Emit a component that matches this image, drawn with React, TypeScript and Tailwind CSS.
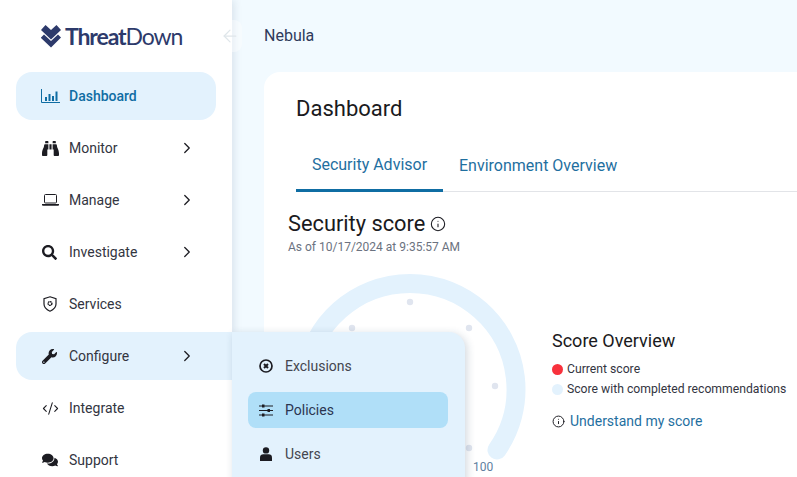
import React from "react";
import { ChevronRight, Info, CodeXml, ArrowLeft } from "lucide-react";
import { FaBinoculars, FaSearch, FaWrench, FaComments } from "react-icons/fa";

const DashIcon = () => (
  <svg width="19" height="14" viewBox="0 0 19 14" fill="none" className="-ml-[1px]">
    <path d="M0.5 0V13.5H19" stroke="#0f6da3" strokeWidth="1" />
    <path d="M4 8h2v4H4zM7.5 5h2v7h-2zM11 7h2v5h-2zM14.5 2.500h2V12h-2z" fill="#0f6da3" />
  </svg>
);
const LaptopIcon = () => (
  <svg width="17" height="12" viewBox="0 0 17 12" fill="none">
    <rect x="2.500" y="0.500" width="12" height="8.500" rx="1" stroke="#1c1c22" />
    <path d="M0 10h17v0.800a1 1 0 0 1-1 1H1a1 1 0 0 1-1-1z" fill="#1c1c22" />
  </svg>
);
const ShieldIcon = () => (
  <svg width="14" height="16" viewBox="0 0 14 16" fill="none">
    <path d="M7 0.800 13 2.800V8c0 3.300-2.700 5.800-6 7.200C3.700 13.800 1 11.300 1 8V2.800z" stroke="#1c1c22" strokeWidth="1.200" />
    <circle cx="7" cy="7.500" r="1.900" stroke="#1c1c22" strokeWidth="1.400" strokeDasharray="1.600 0.400" />
  </svg>
);
const ExcludeIcon = () => (
  <svg width="14" height="14" viewBox="0 0 14 14" fill="none">
    <circle cx="7" cy="7" r="6" stroke="#1c1c22" strokeWidth="1.700" />
    <path d="M5 5l4 4M9 5l-4 4" stroke="#1c1c22" strokeWidth="2" />
  </svg>
);
const SlidersIcon = () => (
  <svg width="14" height="13" viewBox="0 0 14 13" fill="none">
    <path d="M0 2h14M0 6.500h14M0 11h14" stroke="#1c1c22" strokeWidth="1" />
    <rect x="3" y="0.500" width="2.500" height="3" fill="#1c1c22" />
    <rect x="8.500" y="5" width="2.500" height="3" fill="#1c1c22" />
    <rect x="3" y="9.500" width="2.500" height="3" fill="#1c1c22" />
  </svg>
);
const UserIcon = () => (
  <svg width="12" height="14" viewBox="0 0 12 14" fill="#1c1c22" className="ml-[1px]">
    <circle cx="6" cy="3.400" r="3.200" />
    <path d="M0 14V10.500C0 8.500 1.500 7.300 3.200 7.300h5.600C10.500 7.300 12 8.500 12 10.500V14z" />
  </svg>
);

const Logo = () => (
  <div className="flex items-center gap-1">
    <svg width="20" height="23" viewBox="0 0 20 23" fill="#2d3a6b">
      <path d="M0 5 4.500 0 10 5 15.500 0 20 5 10 14.500z" />
      <path d="M0 12.500 3 9.500 10 16 17 9.500 20 12.500 10 22.500 0 13z" />
    </svg>
    <span className="text-[23px] leading-none tracking-[-1.100px] text-[#2d3a6b] font-['Lato',sans-serif]">
      <span className="font-bold">Threat</span>
      <span className="font-normal">Down</span>
    </span>
  </div>
);

const NavItem = ({ icon, label, arrow, active, open }: { icon: React.ReactNode; label: string; arrow?: boolean; active?: boolean; open?: boolean }) => (
  <div className={`flex h-12 shrink-0 items-center pl-[26px] ${open ? "w-[216px] rounded-l-2xl bg-[#e3f2fd] pr-4" : "w-[200px]"} ${active ? "rounded-2xl bg-[#e3f2fd]" : ""}`}>
    <span className="flex w-[27px] items-center">{icon}</span>
    <span className={`flex-1 text-[14px] ${active ? "font-medium text-[#0f6da3]" : "text-[#33353f]"}`}>{label}</span>
    {arrow && <ChevronRight size={18} strokeWidth={1.700} className="mr-[20px] text-[#1c1c22]" />}
  </div>
);

const SubItem = ({ icon, label, active }: { icon: React.ReactNode; label: string; active?: boolean }) => (
  <div className={`flex h-9 items-center rounded-lg pl-[11px] ${active ? "bg-[#b0dff8]" : ""}`}>
    <span className="flex w-[26px] items-center">{icon}</span>
    <span className={`text-[14px] ${active ? "text-[#2b3550]" : "text-[#44464f]"}`}>{label}</span>
  </div>
);

const Gauge = () => {
  const dots = [[410, 304], [469, 330], [495, 388], [469, 450], [352, 330]];
  return (
    <svg width="260" height="204" viewBox="280 273 260 204" className="block">
      <path d="M 323 452 A 106 106 0 1 1 497 452" fill="none" stroke="#e3f2fd" strokeWidth="19" strokeLinecap="round" />
      {dots.map(([x, y]) => (
        <circle key={x * y} cx={x} cy={y} r="3.200" fill="#e0e5ef" />
      ))}
    </svg>
  );
};

export default function App() {
  return (
    <div className="relative flex h-[477px] w-[797px] overflow-hidden bg-[#f2faff] font-['Roboto',sans-serif]">
      <aside className="z-10 flex h-full w-[232px] shrink-0 flex-col bg-white px-4 shadow-[2px_0_8px_rgba(30,60,90,0.12)]">
        <div className="flex h-[72px] shrink-0 items-center pl-[25px]"><Logo /></div>
        <nav className="flex flex-col gap-1">
          <NavItem active icon={<DashIcon />} label="Dashboard" />
          <NavItem arrow icon={<FaBinoculars size={17} color="#1c1c22" />} label="Monitor" />
          <NavItem arrow icon={<LaptopIcon />} label="Manage" />
          <NavItem arrow icon={<FaSearch size={15} color="#1c1c22" />} label="Investigate" />
          <NavItem icon={<span className="pl-[1px]"><ShieldIcon /></span>} label="Services" />
          <NavItem open arrow icon={<FaWrench size={15} color="#1c1c22" />} label="Configure" />
          <NavItem icon={<CodeXml size={17} strokeWidth={1.500} color="#1c1c22" />} label="Integrate" />
          <NavItem icon={<FaComments size={16} color="#1c1c22" />} label="Support" />
        </nav>
      </aside>

      <div className="absolute left-[218px] top-[20px] z-20 flex h-8 w-6 items-center justify-center rounded-lg bg-white/40">
        <ArrowLeft size={20} strokeWidth={1.500} className="text-[#dfe6ea]" />
      </div>

      <main className="flex min-w-0 flex-1 flex-col pl-8">
        <header className="flex h-[72px] shrink-0 items-center text-[16px] text-[#2f3a5c]">Nebula</header>
        <section className="flex-1 rounded-tl-2xl bg-white">
          <div className="pl-8 pt-[22px]">
            <h1 className="text-[22px] leading-[30px] text-[#1a1a20]">Dashboard</h1>
            <div className="mt-[20px] flex border-b border-[#e2e4e8]">
              <div className="-mb-[1px] flex h-[48px] w-[147px] items-center justify-center border-b-[3px] border-[#0f6da3] pb-[3px] text-[16px] text-[#1f6f9f]">Security Advisor</div>
              <div className="flex h-[47px] items-center pb-[3px] pl-4 text-[16px] text-[#1f6f9f]">Environment Overview</div>
            </div>
          </div>
          <div className="flex items-center gap-[5px] pl-6 pt-[19px]">
            <h2 className="text-[21.800px] leading-[26px] text-[#1a1a20]">Security score</h2>
            <Info size={16} strokeWidth={1.600} className="mb-[1px] text-[#1c1c22]" />
          </div>
          <p className="pl-6 pt-[2px] text-[12px] leading-[16px] text-[#6b7280]">As of 10/17/2024 at 9:35:57 AM</p>
          <div className="flex pl-4 pt-[16px]">
            <Gauge />
            <div className="pl-3 pt-[58px]">
              <h3 className="text-[18px] leading-[24px] text-[#1a1a20]">Score Overview</h3>
              <div className="mt-[6px] flex items-center gap-[4px] text-[12.200px] leading-[20px] text-[#33353f]">
                <span className="h-[11px] w-[11px] rounded-full bg-[#f8313c]" />Current score
              </div>
              <div className="flex items-center gap-[4px] text-[12.200px] leading-[20px] text-[#33353f]">
                <span className="h-[11px] w-[11px] rounded-full bg-[#e3f2fd]" />Score with completed recommendations
              </div>
              <div className="mt-[12px] flex items-center gap-[5px] text-[14px] leading-[20px] text-[#1f6f9f]">
                <Info size={13} strokeWidth={1.800} className="text-[#1c1c22]" />Understand my score
              </div>
            </div>
          </div>
        </section>
      </main>

      <div className="absolute left-[232px] top-[332px] z-20 flex h-[160px] w-[233px] flex-col gap-2 rounded-r-2xl bg-[#e3f2fd] pl-4 pr-[17px] pt-4 shadow-[2px_2px_8px_rgba(30,60,90,0.2)]">
        <SubItem icon={<ExcludeIcon />} label="Exclusions" />
        <SubItem active icon={<SlidersIcon />} label="Policies" />
        <SubItem icon={<UserIcon />} label="Users" />
      </div>
      <span className="absolute left-[473px] top-[459px] text-[12px] leading-[16px] text-[#5f7f9f]">100</span>
    </div>
  );
}
